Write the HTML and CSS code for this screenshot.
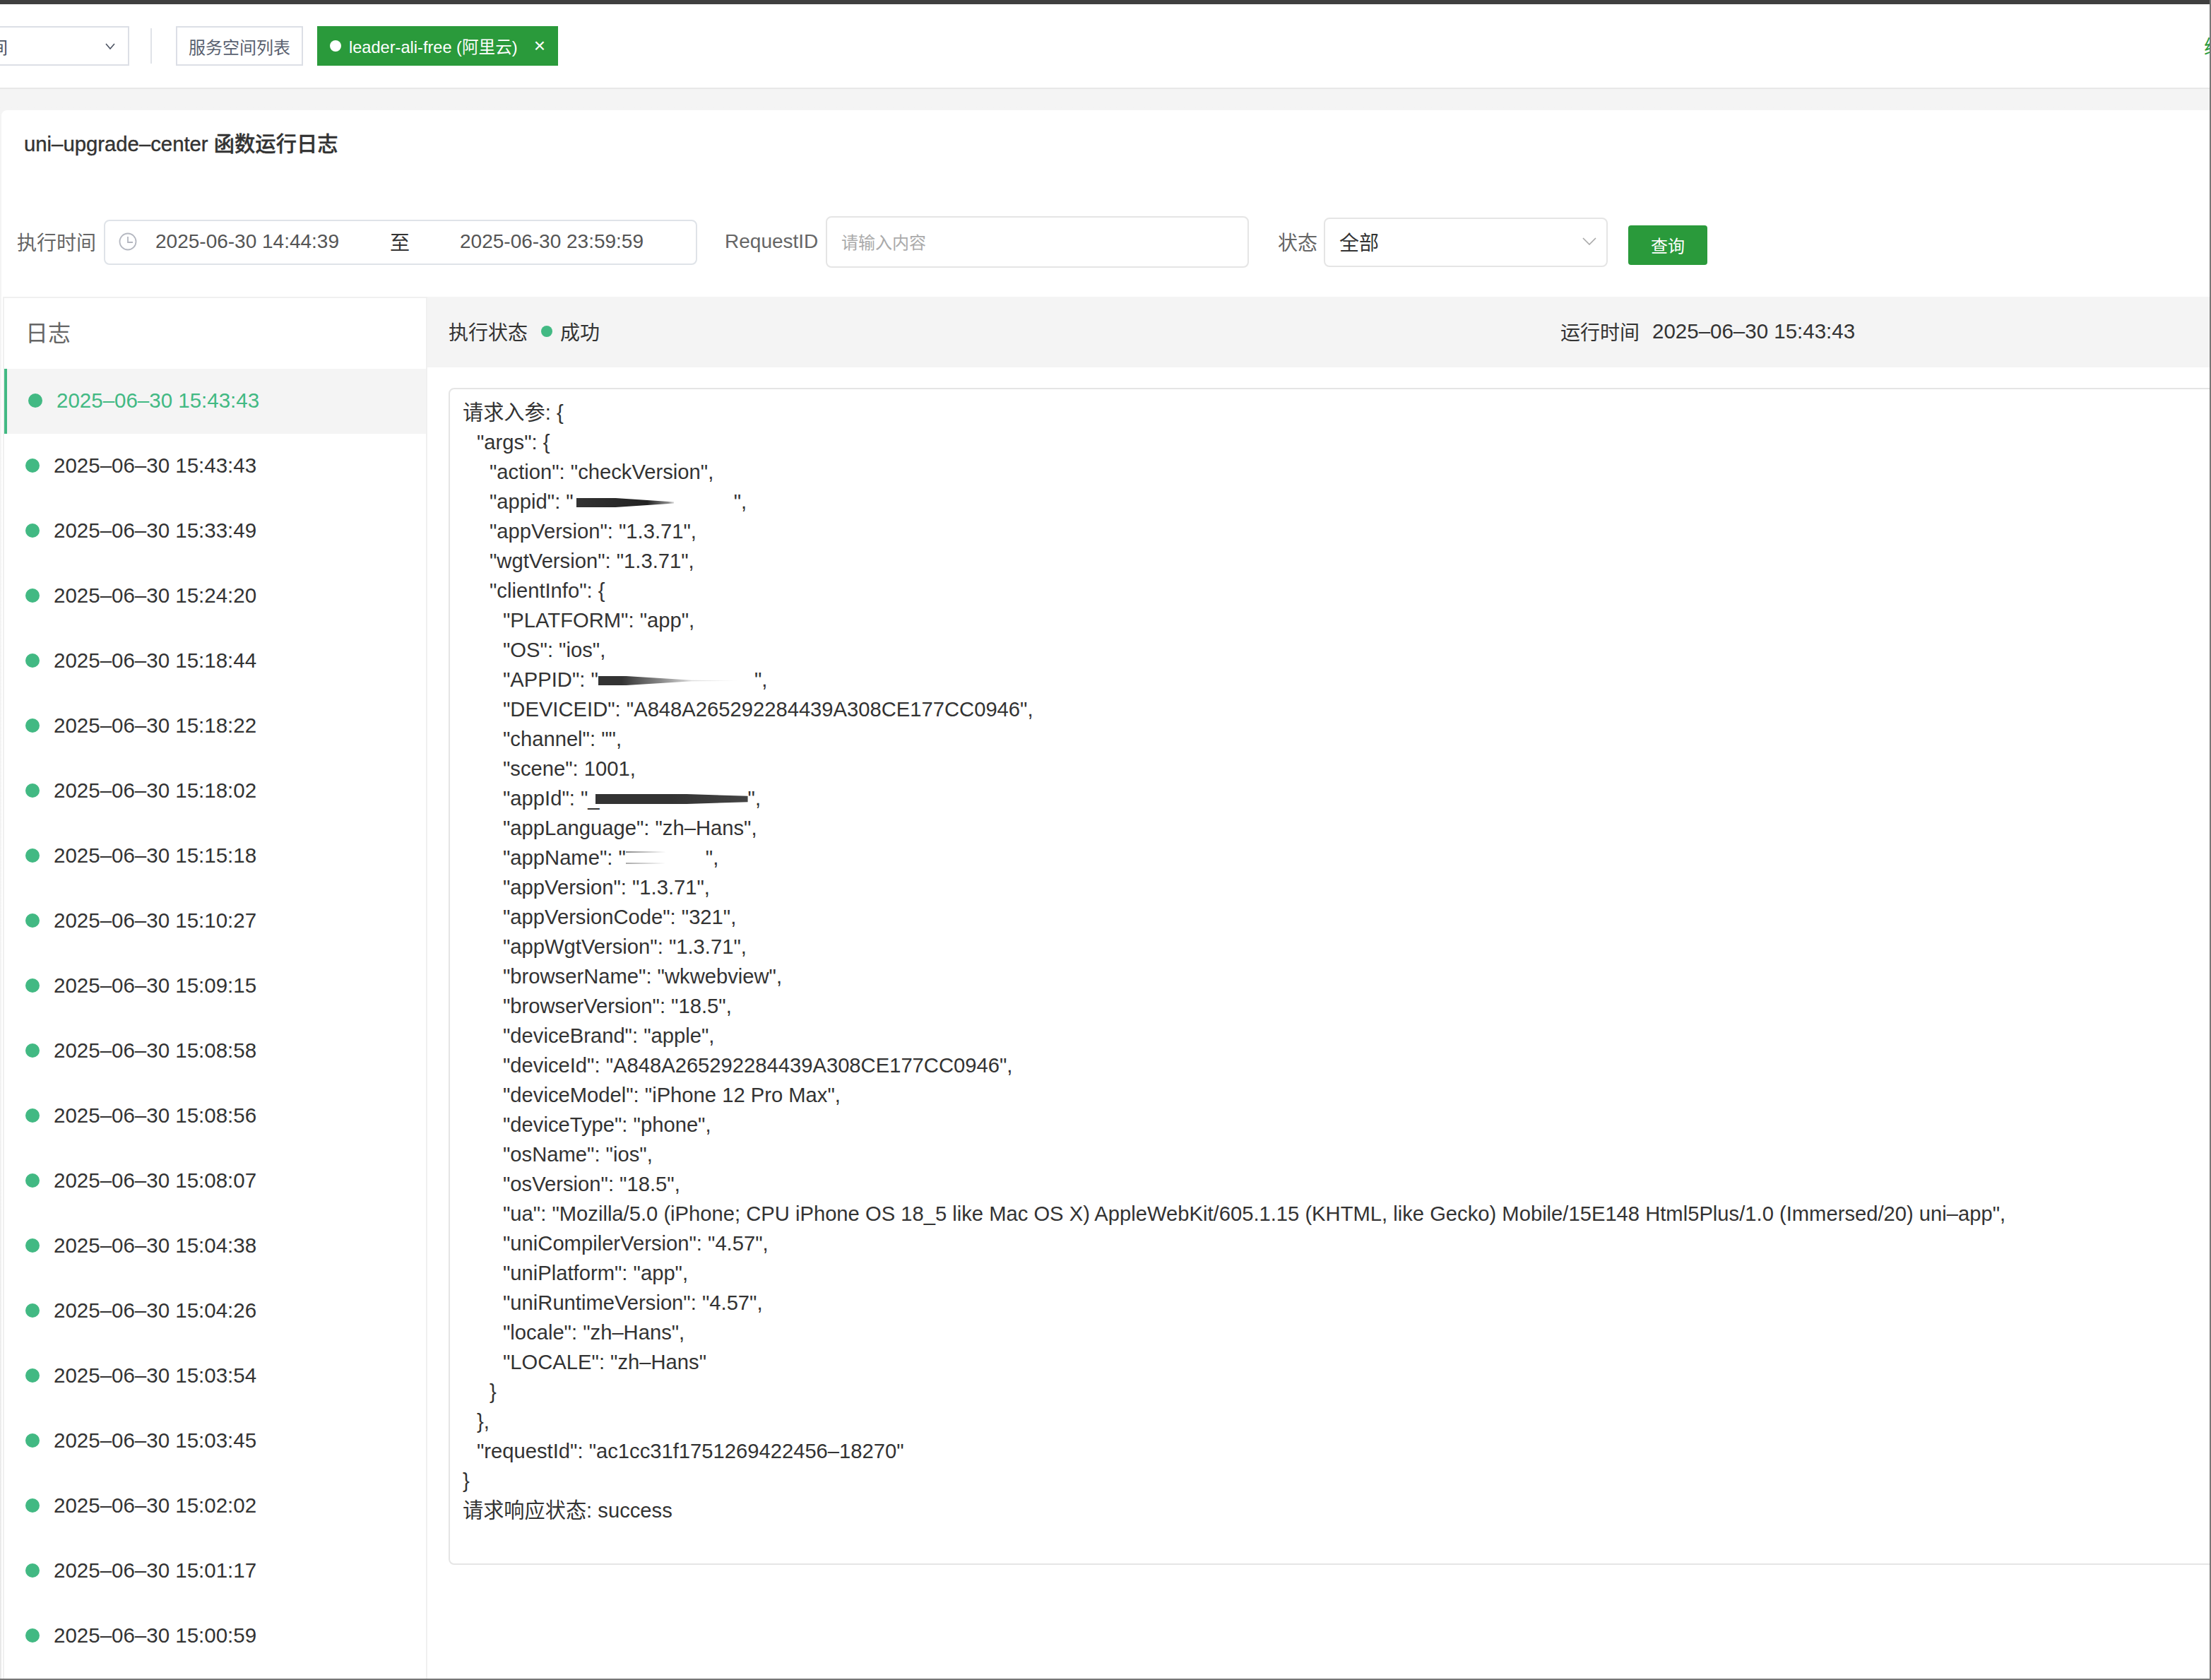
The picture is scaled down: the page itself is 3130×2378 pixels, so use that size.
FILE: index.html
```html
<!DOCTYPE html>
<html lang="zh-CN">
<head>
<meta charset="utf-8">
<title>uni-upgrade-center 函数运行日志</title>
<link rel="stylesheet" href="styles.css">
</head>
<body>
<div class="page">
  <div class="topbar"></div>
  <header class="header">
    <div class="space-select"><span>服务空间</span>
      <svg class="chev-small" viewBox="0 0 14 9"><path d="M1 1l6 7 6-7"/></svg>
    </div>
    <div class="sep"></div>
    <div class="btn-list">服务空间列表</div>
    <div class="tag"><i class="tag-dot"></i><span>leader-ali-free (阿里云)</span><span class="tag-x">×</span></div>
    <div class="header-link">续费</div>
  </header>
  <main class="main">
    <section class="card">
      <h1 class="title">uni–upgrade–center 函数运行日志</h1>
      <form class="filters">
        <label class="label">执行时间</label>
        <div class="range">
          <svg class="clock" viewBox="0 0 26 26"><circle cx="13" cy="13" r="11.5"/><path d="M13 6v8h7"/></svg>
          <span class="range-start">2025-06-30 14:44:39</span>
          <span class="range-sep">至</span>
          <span class="range-end">2025-06-30 23:59:59</span>
        </div>
        <label class="label label-req">RequestID</label>
        <div class="input">请输入内容</div>
        <label class="label label-state">状态</label>
        <div class="select"><span>全部</span>
          <svg class="chev" viewBox="0 0 20 11"><path d="M1 1l9 9 9-9"/></svg>
        </div>
        <div class="query">查询</div>
      </form>
      <div class="panel">
        <aside class="side">
          <div class="side-title">日志</div>
          <ul class="logs">
            <li class="log active"><i class="dot"></i>2025–06–30 15:43:43</li>
            <li class="log"><i class="dot"></i>2025–06–30 15:43:43</li>
            <li class="log"><i class="dot"></i>2025–06–30 15:33:49</li>
            <li class="log"><i class="dot"></i>2025–06–30 15:24:20</li>
            <li class="log"><i class="dot"></i>2025–06–30 15:18:44</li>
            <li class="log"><i class="dot"></i>2025–06–30 15:18:22</li>
            <li class="log"><i class="dot"></i>2025–06–30 15:18:02</li>
            <li class="log"><i class="dot"></i>2025–06–30 15:15:18</li>
            <li class="log"><i class="dot"></i>2025–06–30 15:10:27</li>
            <li class="log"><i class="dot"></i>2025–06–30 15:09:15</li>
            <li class="log"><i class="dot"></i>2025–06–30 15:08:58</li>
            <li class="log"><i class="dot"></i>2025–06–30 15:08:56</li>
            <li class="log"><i class="dot"></i>2025–06–30 15:08:07</li>
            <li class="log"><i class="dot"></i>2025–06–30 15:04:38</li>
            <li class="log"><i class="dot"></i>2025–06–30 15:04:26</li>
            <li class="log"><i class="dot"></i>2025–06–30 15:03:54</li>
            <li class="log"><i class="dot"></i>2025–06–30 15:03:45</li>
            <li class="log"><i class="dot"></i>2025–06–30 15:02:02</li>
            <li class="log"><i class="dot"></i>2025–06–30 15:01:17</li>
            <li class="log"><i class="dot"></i>2025–06–30 15:00:59</li>
          </ul>
        </aside>
        <div class="detail">
          <div class="detail-head">
            <div class="status"><span>执行状态</span><i class="dot-small"></i><span>成功</span></div>
            <div class="runtime"><span>运行时间</span><span class="runtime-date">2025–06–30 15:43:43</span></div>
          </div>
          <div class="output">
            <div>请求入参: {</div>
            <div class="i1">"args": {</div>
            <div class="i2">"action": "checkVersion",</div>
            <div class="i2">"appid": "<span class="redact r1"></span>",</div>
            <div class="i2">"appVersion": "1.3.71",</div>
            <div class="i2">"wgtVersion": "1.3.71",</div>
            <div class="i2">"clientInfo": {</div>
            <div class="i3">"PLATFORM": "app",</div>
            <div class="i3">"OS": "ios",</div>
            <div class="i3">"APPID": "<span class="redact r2"></span>",</div>
            <div class="i3">"DEVICEID": "A848A265292284439A308CE177CC0946",</div>
            <div class="i3">"channel": "",</div>
            <div class="i3">"scene": 1001,</div>
            <div class="i3">"appId": "_<span class="redact r3"></span>",</div>
            <div class="i3">"appLanguage": "zh–Hans",</div>
            <div class="i3">"appName": "<span class="redact r4"></span>",</div>
            <div class="i3">"appVersion": "1.3.71",</div>
            <div class="i3">"appVersionCode": "321",</div>
            <div class="i3">"appWgtVersion": "1.3.71",</div>
            <div class="i3">"browserName": "wkwebview",</div>
            <div class="i3">"browserVersion": "18.5",</div>
            <div class="i3">"deviceBrand": "apple",</div>
            <div class="i3">"deviceId": "A848A265292284439A308CE177CC0946",</div>
            <div class="i3">"deviceModel": "iPhone 12 Pro Max",</div>
            <div class="i3">"deviceType": "phone",</div>
            <div class="i3">"osName": "ios",</div>
            <div class="i3">"osVersion": "18.5",</div>
            <div class="i3">"ua": "Mozilla/5.0 (iPhone; CPU iPhone OS 18_5 like Mac OS X) AppleWebKit/605.1.15 (KHTML, like Gecko) Mobile/15E148 Html5Plus/1.0 (Immersed/20) uni–app",</div>
            <div class="i3">"uniCompilerVersion": "4.57",</div>
            <div class="i3">"uniPlatform": "app",</div>
            <div class="i3">"uniRuntimeVersion": "4.57",</div>
            <div class="i3">"locale": "zh–Hans",</div>
            <div class="i3">"LOCALE": "zh–Hans"</div>
            <div class="i2">}</div>
            <div class="i1">},</div>
            <div class="i1">"requestId": "ac1cc31f1751269422456–18270"</div>
            <div>}</div>
            <div>请求响应状态: success</div>
          </div>
        </div>
      </div>
    </section>
  </main>
</div>
</body>
</html>
```
FILE: styles.css
```css
* { box-sizing: border-box; }
html, body { margin: 0; height: 2378px; overflow: hidden; background: #fff; }
body { font-family: "Liberation Sans", "Noto Sans CJK SC", sans-serif; color: #333; font-size: 29px; }
.page { height: 2378px; display: flex; flex-direction: column; overflow: hidden; border-right: 2px solid #777; border-bottom: 2px solid #777; }
.topbar { height: 6px; background: #3f3f3f; flex: none; }

.header { height: 118px; flex: none; display: flex; align-items: center; position: relative; overflow: hidden; background: #fff; }
.space-select { width: 284px; margin-left: -101px; height: 56px; border: 2px solid #dcdfe6; display: flex; align-items: center; justify-content: space-between; padding: 0 18px 0 14px; font-size: 24px; color: #4c5362; flex: none; }
.chev-small { width: 14px; height: 9px; fill: none; stroke: #4c5362; stroke-width: 1.6; }
.sep { width: 2px; height: 50px; background: #e0e3e8; margin: 0 34px 0 30px; flex: none; }
.btn-list { height: 56px; width: 180px; border: 2px solid #dcdfe6; color: #596170; font-size: 24px; display: flex; align-items: center; justify-content: center; flex: none; }
.tag { height: 56px; width: 341px; margin-left: 20px; background: #2a9a3b; color: #fff; font-size: 23.6px; display: flex; align-items: center; padding-left: 18px; flex: none; }
.tag-dot { width: 16px; height: 16px; border-radius: 50%; background: #fff; margin-right: 11px; }
.tag-x { margin-left: 23px; font-size: 28px; font-weight: 300; }
.header-link { margin-left: auto; margin-right: -48px; color: #2a9a3b; font-size: 28px; flex: none; white-space: nowrap; }

.main { flex: 1; min-height: 0; background: linear-gradient(#f4f4f4, #f3f3f3 60%, #e8e8e8); border-top: 2px solid #e8e8e8; padding: 30px 0 0 2px; display: flex; flex-direction: column; }
.card { flex: 1; min-height: 0; background: #fff; border-radius: 8px 0 0 0; display: flex; flex-direction: column; }
.title { margin: 28px 0 0 32px; font-size: 29.3px; line-height: 40px; font-weight: 500; color: #333; -webkit-text-stroke: .4px #333; height: 40px; }

.filters { display: flex; align-items: center; height: 73px; margin-top: 82px; padding-left: 22px; flex: none; }
.label { font-size: 28px; color: #666; white-space: nowrap; flex: none; padding-bottom: 2px; }
.range { width: 840px; height: 64px; margin-left: 11px; border: 2px solid #dfe3e8; border-radius: 8px; display: flex; align-items: center; padding: 0 0 2px 19px; color: #555; font-size: 28px; flex: none; }
.clock { width: 26px; height: 26px; fill: none; stroke: #b4b7c0; stroke-width: 1.8; flex: none; }
.range-start { margin-left: 26px; width: 258px; white-space: nowrap; }
.range-sep { margin-left: 74px; width: 28px; color: #333; }
.range-end { margin-left: 71px; white-space: nowrap; }
.label-req { margin-left: 39px; width: 143px; }
.input { width: 599px; height: 73px; border: 2px solid #e5e5e5; border-radius: 8px; padding: 0 0 2px 20px; display: flex; align-items: center; font-size: 24px; color: #aaa; flex: none; }
.label-state { margin-left: 41px; width: 65px; }
.select { width: 402px; height: 70px; border: 2px solid #e5e5e5; border-radius: 8px; display: flex; align-items: center; justify-content: space-between; padding: 0 14px 2px 20px; font-size: 28px; color: #333; flex: none; }
.chev { width: 20px; height: 11px; fill: none; stroke: #a8a8a8; stroke-width: 1.6; }
.query { width: 112px; height: 56px; margin: 8px 0 0 29px; background: #2a9a3b; border-radius: 4px; color: #fff; font-size: 24px; display: flex; align-items: center; justify-content: center; flex: none; }

.panel { flex: 1; min-height: 0; margin-top: 41px; display: flex; overflow: hidden; }
.side { width: 601px; margin-left: 2px; flex: none; border: 2px solid #f0f0f0; border-bottom: 0; }
.side-title { height: 100px; display: flex; align-items: center; padding: 0 0 6px 30px; font-size: 32px; color: #666; }
.logs { list-style: none; margin: 0; padding: 0; }
.log { height: 92px; display: flex; align-items: center; padding: 0 0 2px 30px; color: #333; font-size: 29.5px; white-space: nowrap; }
.dot { width: 20px; height: 20px; border-radius: 50%; background: #42b983; margin-right: 20px; flex: none; }
.log.active { background: #f4f4f4; color: #42b983; border-left: 4px solid #42b983; }

.detail { flex: 1; min-width: 0; }
.detail-head { height: 100px; background: #f4f4f4; display: flex; align-items: center; padding: 0 0 2px 30px; font-size: 28px; color: #333; }
.status { display: flex; align-items: center; width: 1574px; flex: none; }
.dot-small { width: 16px; height: 16px; border-radius: 50%; background: #42b983; margin: 0 11px 0 19px; }
.runtime { display: flex; align-items: center; gap: 18px; white-space: nowrap; }
.runtime-date { font-size: 29.5px; }
.output { margin: 29px -20px 0 30px; height: 1666px; border: 2px solid #e5e5e5; border-radius: 8px; padding: 12px 0 0 18px; line-height: 42px; white-space: nowrap; font-size: 29.2px; color: #333; }
.i1 { padding-left: 20px; }
.i2 { padding-left: 38px; }
.i3 { padding-left: 57px; }
.redact { display: inline-block; height: 13px; vertical-align: 2px; }
.r1 { width: 223px; margin-left: 4px; background: linear-gradient(90deg, #333, #222 45%, #888 58%, transparent 64%); clip-path: polygon(0 0, 25% 0, 62% 42%, 62% 58%, 25% 100%, 0 100%); }
.r2 { width: 221px; background: linear-gradient(90deg, #333, #333 15%, #888 40%, #ddd 60%, transparent 90%); clip-path: polygon(0 0, 18% 0, 60% 45%, 90% 48%, 90% 52%, 60% 55%, 18% 100%, 0 100%); }
.r3 { width: 216px; height: 14px; margin-left: -6px; background: linear-gradient(90deg, #333, #333 50%, #444); clip-path: polygon(0 0, 60% 0, 100% 20%, 100% 80%, 60% 100%, 0 100%); }
.r4 { width: 113px; height: 18px; vertical-align: 1px; background: linear-gradient(90deg, #888, transparent 50%) top / 100% 2px no-repeat, linear-gradient(90deg, #aaa, transparent 50%) bottom / 100% 2px no-repeat; }
```
